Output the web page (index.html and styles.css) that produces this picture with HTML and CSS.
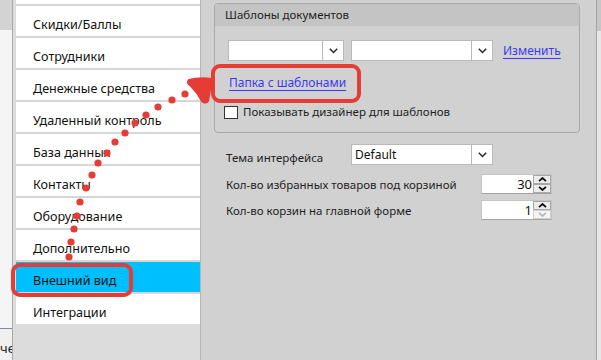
FILE: index.html
```html
<!DOCTYPE html>
<html>
<head>
    <meta charset="UTF-8">
    <title>Настройки</title>
    <link rel="stylesheet" href="styles.css">
</head>
<body>
    <div class="window">
        <!-- левая полоса -->
        <div class="strip">
            <div class="strip-top"></div>
            <div class="strip-fill"></div>
            <div class="strip-bottom"><span>че</span></div>
        </div>
        <!-- меню -->
        <div class="nav">
            <ul class="menu">
                <li></li>
                <li>Скидки/Баллы</li>
                <li>Сотрудники</li>
                <li>Денежные средства</li>
                <li>Удаленный контроль</li>
                <li>База данных</li>
                <li>Контакты</li>
                <li>Оборудование</li>
                <li>Дополнительно</li>
                <li class="active">Внешний вид</li>
                <li class="last">Интеграции</li>
            </ul>
        </div>
        <!-- содержимое -->
        <div class="content">
            <div class="group">
                <div class="group-title">Шаблоны документов</div>
                <div class="group-body">
                    <div class="row combos">
                        <div class="combo w1">
                            <span class="combo-text"></span>
                            <span class="combo-btn"><svg width="9" height="6" viewBox="0 0 9 6"><polyline points="0.8,0.8 4.5,4.5 8.2,0.8" fill="none" stroke="#222" stroke-width="1.4"/></svg></span>
                        </div>
                        <div class="combo w2">
                            <span class="combo-text"></span>
                            <span class="combo-btn"><svg width="9" height="6" viewBox="0 0 9 6"><polyline points="0.8,0.8 4.5,4.5 8.2,0.8" fill="none" stroke="#222" stroke-width="1.4"/></svg></span>
                        </div>
                        <a class="link edit">Изменить</a>
                    </div>
                    <div class="row folder">
                        <a class="link">Папка с шаблонами</a>
                    </div>
                    <label class="row check">
                        <span class="box"></span>
                        <span>Показывать дизайнер для шаблонов</span>
                    </label>
                </div>
            </div>

            <div class="form">
                <div class="form-row theme">
                    <span class="label short">Тема интерфейса</span>
                    <div class="combo w2">
                        <span class="combo-text">Default</span>
                        <span class="combo-btn"><svg width="9" height="6" viewBox="0 0 9 6"><polyline points="0.8,0.8 4.5,4.5 8.2,0.8" fill="none" stroke="#222" stroke-width="1.4"/></svg></span>
                    </div>
                </div>
                <div class="form-row fav">
                    <span class="label long">Кол-во избранных товаров под корзиной</span>
                    <div class="spin">
                        <span class="spin-value">30</span>
                        <span class="spin-btns">
                            <span class="spin-btn"><svg width="9" height="5" viewBox="0 0 9 5"><polyline points="1,4.2 4.5,1 8,4.2" fill="none" stroke="#111" stroke-width="1.8"/></svg></span>
                            <span class="spin-btn"><svg width="9" height="5" viewBox="0 0 9 5"><polyline points="1,0.8 4.5,4 8,0.8" fill="none" stroke="#111" stroke-width="1.8"/></svg></span>
                        </span>
                    </div>
                </div>
                <div class="form-row carts">
                    <span class="label long">Кол-во корзин на главной форме</span>
                    <div class="spin">
                        <span class="spin-value">1</span>
                        <span class="spin-btns">
                            <span class="spin-btn"><svg width="9" height="5" viewBox="0 0 9 5"><polyline points="1,4.2 4.5,1 8,4.2" fill="none" stroke="#111" stroke-width="1.8"/></svg></span>
                            <span class="spin-btn off"><svg width="9" height="5" viewBox="0 0 9 5"><polyline points="1,0.8 4.5,4 8,0.8" fill="none" stroke="#b8b8b8" stroke-width="1.8"/></svg></span>
                        </span>
                    </div>
                </div>
            </div>
        </div>
        <!-- полоса прокрутки -->
        <div class="scrollbar"><div class="thumb"></div></div>

        <!-- пометки поверх скриншота -->
        <svg class="marks" width="601" height="360" viewBox="0 0 601 360">
            <g fill="none" stroke="#e53c35" stroke-width="4">
                <rect x="213" y="66" width="146" height="35" rx="7"/>
                <rect x="13" y="265" width="118" height="30" rx="7"/>
            </g>
            <g fill="#e53c35">
                <circle cx="69" cy="257" r="3.6"/>
                <circle cx="71" cy="242" r="3.6"/>
                <circle cx="74" cy="229" r="3.6"/>
                <circle cx="77" cy="216" r="3.6"/>
                <circle cx="80" cy="202" r="3.6"/>
                <circle cx="86" cy="188" r="3.6"/>
                <circle cx="92" cy="175" r="3.6"/>
                <circle cx="98" cy="163" r="3.6"/>
                <circle cx="107" cy="153" r="3.6"/>
                <circle cx="115" cy="142" r="3.6"/>
                <circle cx="125" cy="133" r="3.6"/>
                <circle cx="135" cy="123" r="3.6"/>
                <circle cx="146" cy="115" r="3.6"/>
                <circle cx="158" cy="107" r="3.6"/>
                <circle cx="172" cy="100" r="3.6"/>
                <circle cx="185" cy="94" r="3.6"/>
                <path d="M189,80 Q200,77 212,79 L208,101 Q205,104 202,101 Q198,93 191,86 Q186,83 189,80 Z" stroke="#e53c35" stroke-width="2" stroke-linejoin="round"/>
            </g>
        </svg>
    </div>
</body>
</html>
```

FILE: styles.css
```css
body {
    margin: 0;
    background-color: #D1D1D1;
    font-family: "Noto Sans", "Open Sans", sans-serif;
    font-size: 11.5px;
    color: #1E1E1E;
    overflow: hidden;
}

.window {
    position: relative;
    display: flex;
    width: 601px;
    height: 360px;
    overflow: hidden;
}

/* левая полоса */

.strip {
    display: flex;
    flex-direction: column;
    width: 12px;
    border-right: 1px solid #A9A9A9;
}
.strip-top {
    height: 30px;
    background-color: #D3D3D3;
}
.strip-fill {
    flex: 1;
    background-color: #F5F5F5;
}
.strip-bottom {
    height: 31px;
    border-top: 1px solid #7D8CA3;
    background-color: #F0F0F0;
    overflow: hidden;
    font-size: 13px;
    line-height: 38px;
    white-space: nowrap;
}

/* меню */

.nav {
    width: 187px;
    background-color: #DCDCDC;
}
.menu {
    margin: -26px 0 0 3px;
    padding: 0;
    width: 184px;
    list-style: none;
}
.menu li {
    height: 22px;
    padding: 8px 0 0 17px;
    border-bottom: 2px solid #D6D6D6;
    background-color: #FFF;
    font-size: 12.6px;
    line-height: 22px;
    color: #111;
}
.menu li.active {
    background-color: #00BFFF;
}
.menu li.last {
    border-bottom: 0;
}

/* содержимое */

.content {
    flex: 1;
    padding: 3px 16px 0 13px;
    border-left: 1px solid #B6B6B6;
    background-color: #D1D1D1;
}

.group {
    height: 128px;
    border: 1px solid #A9A9A9;
    border-radius: 4px;
    overflow: hidden;
}
.group-title {
    height: 22px;
    padding-left: 10px;
    background-color: #C4C4C4;
    line-height: 22px;
}
.group-body {
    padding: 14px 0 0 13px;
}

.row {
    display: flex;
    align-items: center;
}
.combos {
    gap: 7px;
}

.combo {
    display: flex;
    box-sizing: border-box;
    height: 21px;
    border: 1px solid #B9B9B9;
    background-color: #FFF;
}
.combo.w1 {
    width: 116px;
}
.combo.w2 {
    width: 142px;
}
.combo-text {
    flex: 1;
    padding-left: 3px;
    font-size: 12px;
    line-height: 19px;
    color: #111;
}
.combo-btn {
    display: flex;
    align-items: center;
    justify-content: center;
    width: 20px;
    border-left: 1px solid #B9B9B9;
}

.link {
    color: #3A3AF5;
    font-size: 12px;
    text-decoration: underline;
    text-underline-offset: 3px;
    cursor: pointer;
}
.link.edit {
    margin-left: 3px;
}

.folder {
    margin-top: 14px;
    padding-left: 1px;
    line-height: 16px;
}

.check {
    margin: 14px 0 0 -4px;
    gap: 5px;
    line-height: 14px;
}
.check .box {
    box-sizing: border-box;
    width: 14px;
    height: 13px;
    border: 1px solid #333;
    background-color: #FFF;
}

/* форма */

.form {
    padding: 11px 0 0 12px;
}
.form-row {
    display: flex;
    align-items: center;
}
.form-row.fav {
    margin-top: 9px;
}
.form-row.carts {
    margin-top: 6px;
}
.label.short {
    width: 125px;
}
.label.long {
    width: 255px;
}
.form-row.theme .label {
    padding-top: 5px;
}

.spin {
    display: flex;
    box-sizing: border-box;
    width: 71px;
    height: 20px;
    border: 1px solid #C4C4C4;
    border-bottom-color: #A3A3A3;
    background-color: #FFF;
}
.spin-value {
    flex: 1;
    padding-right: 1px;
    text-align: right;
    font-size: 13px;
    line-height: 19px;
    color: #111;
}
.spin-btns {
    display: flex;
    flex-direction: column;
    width: 18px;
}
.spin-btn {
    display: flex;
    flex: 1;
    align-items: center;
    justify-content: center;
    border: 1px solid #A8A8A8;
    background-color: #ECECEC;
}
.spin-btn.off {
    border-color: #D0D0D0;
    background-color: #F4F4F4;
}

/* полоса прокрутки */

.scrollbar {
    width: 4px;
    border-left: 1px solid #A5A5A5;
    background-color: #E6E6E6;
}
.thumb {
    height: 31px;
    background-color: #C6C6C6;
}

/* пометки */

.marks {
    position: absolute;
    top: 0;
    left: 0;
    pointer-events: none;
}
```
